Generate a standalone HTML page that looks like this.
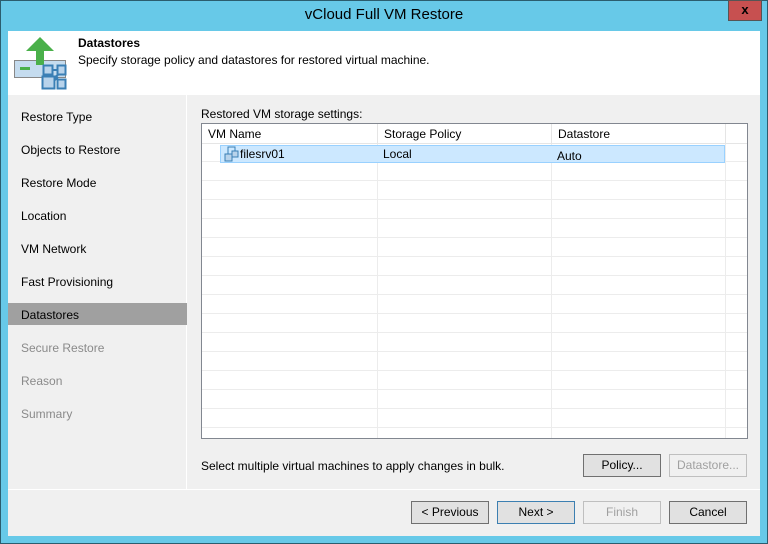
<!DOCTYPE html>
<html><head><style>
*{margin:0;padding:0;box-sizing:border-box}
body{width:768px;height:544px;background:#67c9e8;font-family:"Liberation Sans",sans-serif;font-size:12px;color:#000;position:relative;overflow:hidden}
.frame{position:absolute;left:0;top:0;width:768px;height:544px;border:1px solid #2b5d6e}
.title{position:absolute;left:0;top:6px;width:768px;text-align:center;font-size:15px;color:#000}
.close{position:absolute;left:728px;top:0;width:34px;height:21px;background:#c75050;border:1px solid #555;color:#000;font-weight:bold;text-align:center;line-height:18px;font-size:13px}
.win{position:absolute;left:8px;top:31px;width:752px;height:505px;background:#f0f0f0}
.head{position:absolute;left:0;top:0;width:752px;height:64px;background:#fff}
.h1{position:absolute;left:70px;top:5px;font-weight:bold;font-size:12px}
.h2{position:absolute;left:70px;top:22px}
.nav{position:absolute;left:0;top:64px;width:179px;height:394px;background:#f0f0f0;border-right:1px solid #fff}
.nav div{position:absolute;left:13px;font-size:12px}
.nav .dis{color:#8a8a8a}
.sel{position:absolute;left:0;top:208px;width:179px;height:22px;background:#a0a0a0}
.lbl{position:absolute;left:193px;top:76px}
.tbl{position:absolute;left:193px;top:92px;width:547px;height:316px;border:1px solid #828790;background:#fff;
background-image:repeating-linear-gradient(to bottom,transparent 0 18px,#ececec 18px 19px);background-position:0 19px;overflow:hidden}
.hd{position:absolute;top:0;height:20px;background:#fff;border-right:1px solid #e5e5e5;border-bottom:1px solid #e5e5e5;padding:3px 6px}
.vl{position:absolute;top:20px;bottom:0;width:1px;background:#ececec}
.row{position:absolute;left:18px;top:21px;width:505px;height:18px;background:#cce8ff;border:1px solid #99d1ff}
.bot{position:absolute;left:0;top:458px;width:752px;height:1px;background:#fff}
.btn{position:absolute;width:78px;height:23px;border:1px solid #adadad;background:#e1e1e1;text-align:center;line-height:21px;color:#000}
.btn.d{color:#a0a0a0;background:#f0f0f0;border-color:#bfbfbf}
.btn.k{border-color:#707070}
.btn.n{border-color:#3c7fb1}
</style></head><body>
<div class="frame"></div>
<div class="title">vCloud Full VM Restore</div>
<div class="close">x</div>
<div class="win">
 <div class="head">
  <svg style="position:absolute;left:0;top:0" width="64" height="64" viewBox="0 0 64 64">
   <rect x="6.5" y="29.5" width="51" height="17" fill="#c5dcef" stroke="#888" stroke-width="1"/>
   <rect x="12" y="36" width="10" height="3" fill="#4ab04a"/>
   <polygon points="32,6 18,20 28,20 28,34 36,34 36,20 46,20" fill="#4ab04a"/>
   <path d="M45 39h4M40 44v1M47 49l3-3M47 46l3-2" stroke="#3a7fb5" stroke-width="2"/>
   <rect x="35.5" y="34.5" width="9" height="9" fill="#b8d3eb" stroke="#3a7fb5" stroke-width="2"/>
   <rect x="49.5" y="34.5" width="8" height="9" fill="#b8d3eb" stroke="#3a7fb5" stroke-width="2"/>
   <rect x="49.5" y="48.5" width="8" height="9" fill="#b8d3eb" stroke="#3a7fb5" stroke-width="2"/>
   <rect x="34.5" y="45.5" width="12" height="12" fill="#b8d3eb" stroke="#3a7fb5" stroke-width="2"/>
  </svg>
  <div class="h1">Datastores</div>
  <div class="h2">Specify storage policy and datastores for restored virtual machine.</div>
 </div>
 <div class="nav">
  <div style="top:15px">Restore Type</div>
  <div style="top:48px">Objects to Restore</div>
  <div style="top:81px">Restore Mode</div>
  <div style="top:114px">Location</div>
  <div style="top:147px">VM Network</div>
  <div style="top:180px">Fast Provisioning</div>
  <div class="sel" style="left:0;top:208px"></div>
  <div style="top:213px">Datastores</div>
  <div class="dis" style="top:246px">Secure Restore</div>
  <div class="dis" style="top:279px">Reason</div>
  <div class="dis" style="top:312px">Summary</div>
 </div>
 <div class="lbl">Restored VM storage settings:</div>
 <div class="tbl">
  <div class="vl" style="left:175px"></div><div class="vl" style="left:349px"></div><div class="vl" style="left:523px"></div>
  <div class="hd" style="left:0;width:176px">VM Name</div>
  <div class="hd" style="left:176px;width:174px">Storage Policy</div>
  <div class="hd" style="left:350px;width:174px">Datastore</div>
  <div class="hd" style="left:524px;width:30px;border-right:none"></div>
  <div class="row">
   <svg style="position:absolute;left:3px;top:0" width="16" height="16"><rect x="4" y="1" width="7" height="7" fill="none" stroke="#3a7fb5"/><rect x="8" y="5" width="6" height="6" fill="#b8d3eb" stroke="#3a7fb5"/><rect x="1" y="8" width="7" height="7" fill="#b8d3eb" stroke="#3a7fb5"/></svg>
   <span style="position:absolute;left:19px;top:1px">filesrv01</span>
   <span style="position:absolute;left:162px;top:1px">Local</span>
   <span style="position:absolute;left:336px;top:3px">Auto</span>
  </div>
 </div>
 <div style="position:absolute;left:193px;top:428px">Select multiple virtual machines to apply changes in bulk.</div>
 <div class="btn k" style="left:575px;top:423px">Policy...</div>
 <div class="btn d" style="left:661px;top:423px">Datastore...</div>
 <div class="bot"></div>
 <div class="btn k" style="left:403px;top:470px">&lt; Previous</div>
 <div class="btn n" style="left:489px;top:470px">Next &gt;</div>
 <div class="btn d" style="left:575px;top:470px">Finish</div>
 <div class="btn k" style="left:661px;top:470px">Cancel</div>
</div>
</body></html>
